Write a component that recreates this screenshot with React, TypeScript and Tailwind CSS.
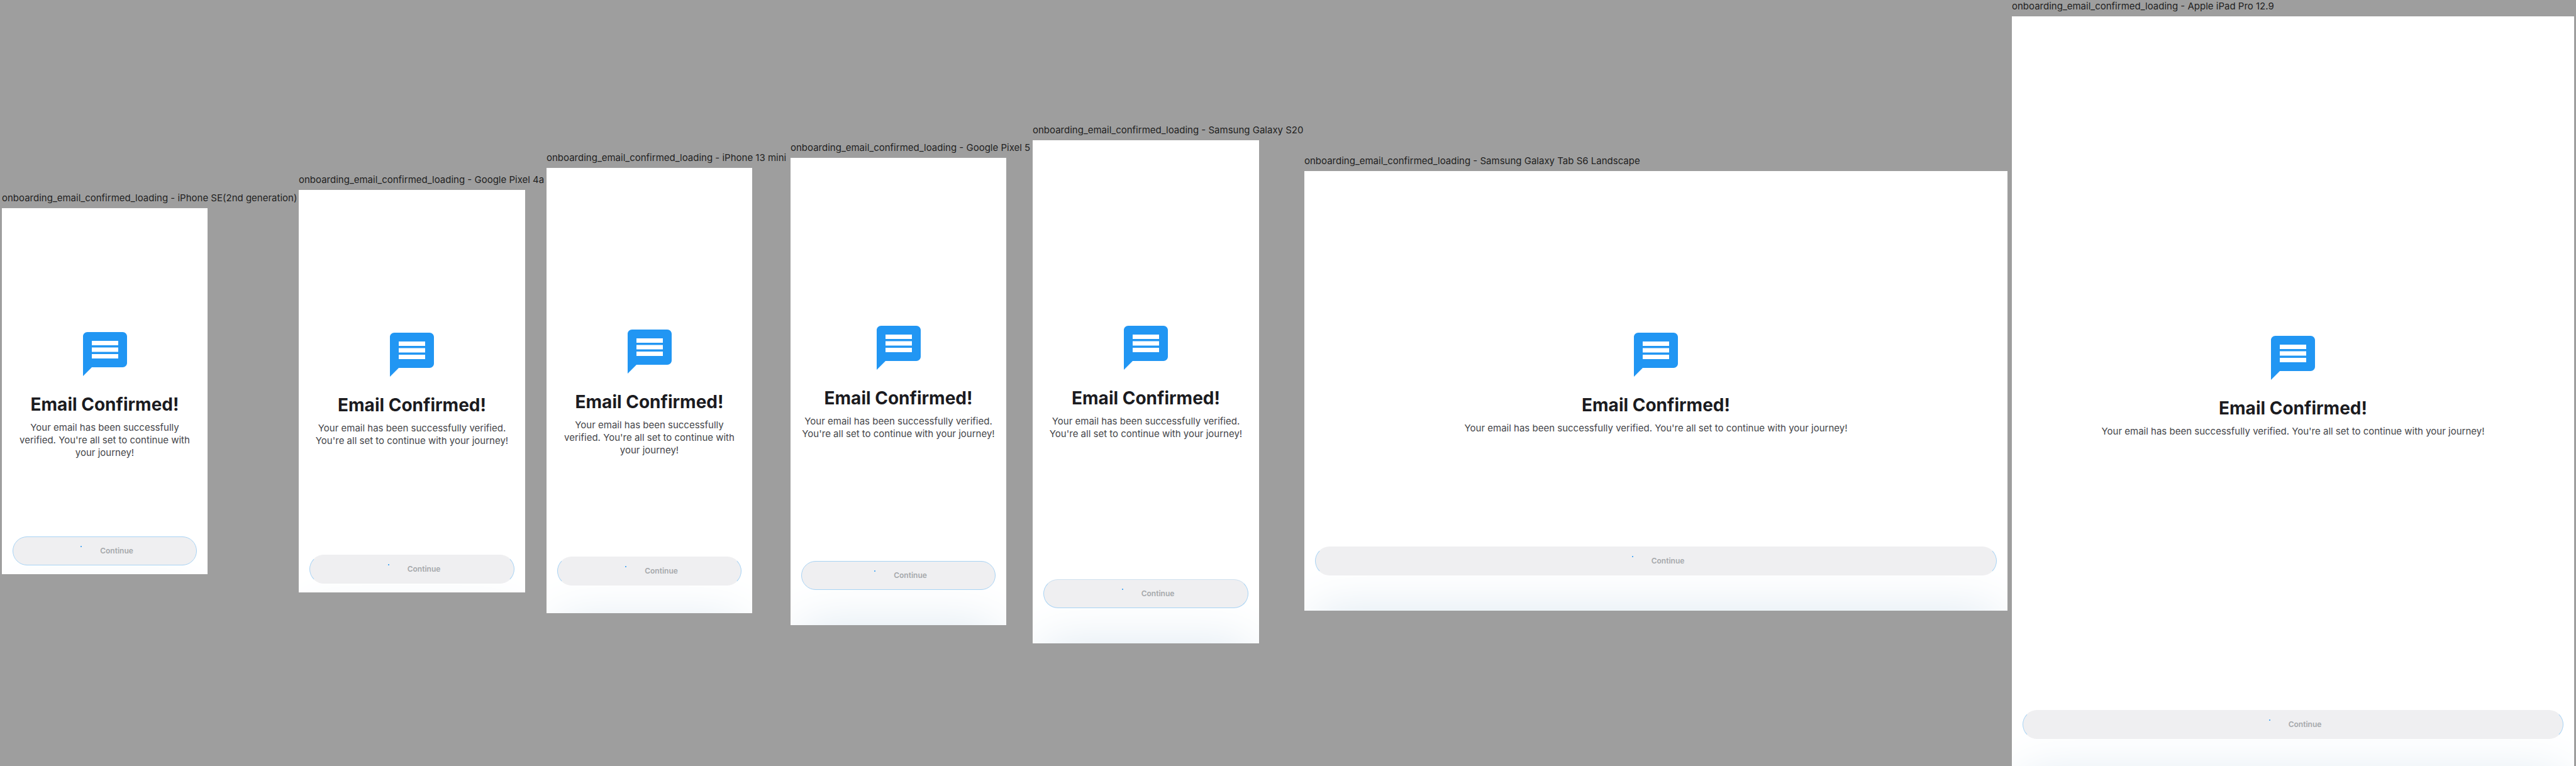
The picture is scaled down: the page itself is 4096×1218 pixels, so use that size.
import { clsx } from "clsx";

type Board = {
  device: string;
  place: string;
  frame: string;
  outline: string;
};

const FULL = "border-[#a8d3f4]";
const SIDES = "border-x-[#a8d3f4] border-y-[#efeff1]";

const boards: Board[] = [
  { device: "iPhone SE(2nd generation)", place: "grow-[327] mt-[305px]", frame: "aspect-[375/667] pt-[190px] pb-[14px]", outline: FULL },
  { device: "Google Pixel 4a", place: "grow-[360] ml-[145px] mt-[276px]", frame: "aspect-[412/732] pt-[220px] pb-[14px]", outline: SIDES },
  { device: "iPhone 13 mini", place: "grow-[327] ml-[34px] mt-[241px]", frame: "aspect-[375/812] pt-[250px] pb-[44px]", outline: SIDES },
  { device: "Google Pixel 5", place: "grow-[343] ml-[61px] mt-[225px]", frame: "aspect-[393/851] pt-[260px] pb-[56px]", outline: FULL },
  { device: "Samsung Galaxy S20", place: "grow-[360] ml-[42px] mt-[197px]", frame: "aspect-[412/915] pt-[288px] pb-[56px]", outline: "border-[#a8d3f4] border-t-[#cfe1ef]" },
  { device: "Samsung Galaxy Tab S6 Landscape", place: "grow-[1118] ml-[72px] mt-[246px]", frame: "aspect-[1280/800] pt-[250px] pb-[56px]", outline: SIDES },
  { device: "Apple iPad Pro 12.9", place: "grow-[894] ml-[7px]", frame: "aspect-[1024/1366] pt-[501px] pb-[44px]", outline: SIDES },
];

function MessageIcon() {
  return (
    <svg viewBox="0 0 24 24" className="size-[84px] shrink-0 fill-[#2196f3]" aria-hidden="true">
      <path
        fillRule="evenodd"
        d="M20 2H4c-1.1 0-2 .9-2 2v18l4-4h14c1.1 0 2-.9 2-2V4c0-1.1-.9-2-2-2zM6 6h12v2H6zM6 9h12v2H6zM6 12h12v2H6z"
      />
    </svg>
  );
}

function Artboard({ device, place, frame, outline }: Board) {
  return (
    <article className={clsx("min-w-0 basis-0", place)}>
      <h2 className="mb-1.5 h-5 text-[15px] leading-5 whitespace-nowrap text-[#1f1f1f]">
        onboarding_email_confirmed_loading - {device}
      </h2>
      <section className={clsx("flex flex-col items-center overflow-hidden bg-white px-[17px] text-center", frame)}>
        <MessageIcon />
        <h1 className="mt-[22px] text-[28px] leading-8 font-bold text-[#1b1b1f]">Email Confirmed!</h1>
        <p className="mt-[11px] text-[15px] leading-5 text-[#45464a]">
          Your email has been successfully verified. You're all set to continue with your journey!
        </p>
        <div className="relative mt-auto w-full">
          {/* soft glow rising from below the button */}
          <div className="pointer-events-none absolute inset-x-0 top-full mt-14 h-40 shadow-[0_0_80px_#dde8f1]" />
          <button
            type="button"
            disabled
            className={clsx(
              "relative flex h-[46px] w-full items-center justify-center gap-[22px] rounded-full border bg-[#efeff1] text-[12px] font-semibold text-[#a5a8ab]",
              outline,
            )}
          >
            <span className="flex size-4 justify-center" aria-hidden="true">
              <span className="size-[2px] rounded-full bg-[#2196f3]" />
            </span>
            Continue
          </button>
        </div>
      </section>
    </article>
  );
}

export default function App() {
  return (
    <main className="flex min-h-screen items-start overflow-hidden bg-[#9e9e9e] px-[3px] font-['Inter',sans-serif]">
      {boards.map((board) => (
        <Artboard key={board.device} {...board} />
      ))}
    </main>
  );
}
